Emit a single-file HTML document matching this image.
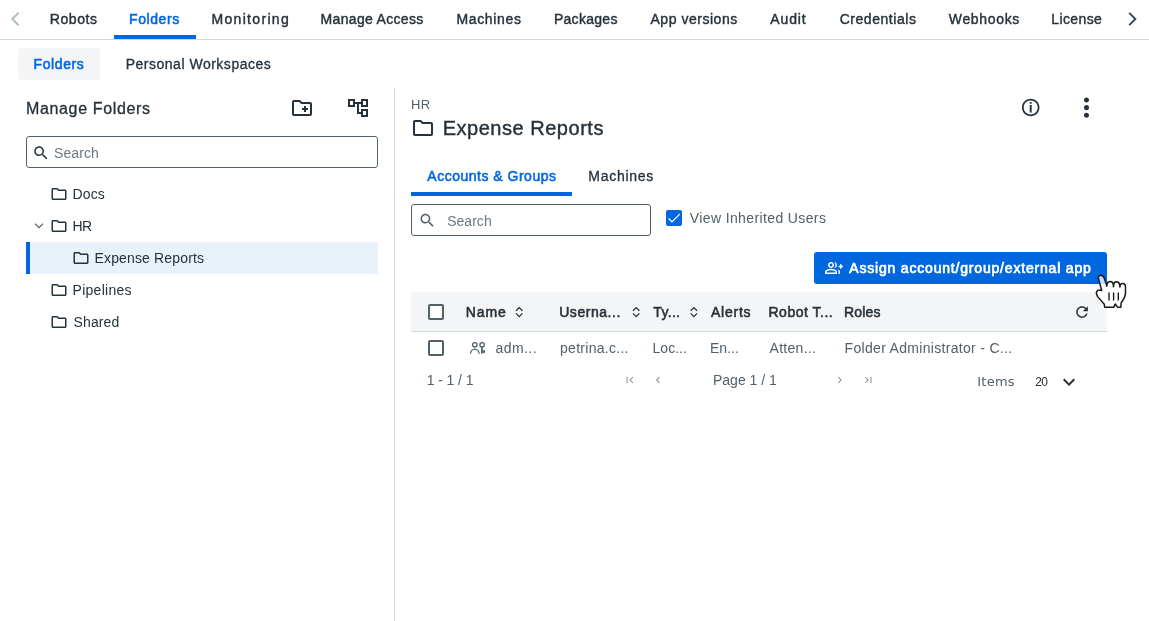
<!DOCTYPE html>
<html lang="en">
<head>
<meta charset="utf-8">
<title>Folders</title>
<style>
html,body{margin:0;padding:0;background:#fff;}
body{width:1149px;height:621px;position:relative;overflow:hidden;font-family:"Liberation Sans",sans-serif;}
.t{position:absolute;white-space:nowrap;line-height:20px;font-family:"Liberation Sans",sans-serif;}
.b{position:absolute;box-sizing:border-box;}
svg{position:absolute;overflow:visible;}
</style>
</head>
<body>
<!-- top nav -->
<div class="b" style="left:0;top:39px;width:1149px;height:1px;background:#cfd8dd"></div>
<div class="b" style="left:114px;top:35px;width:82px;height:4px;background:#0067df"></div>
<!-- sub tabs -->
<div class="b" style="left:18px;top:48px;width:82px;height:32px;background:#f4f5f7;border-radius:3px"></div>
<!-- left panel -->
<div class="b" style="left:26px;top:136px;width:352px;height:32px;border:1px solid #526069;border-radius:3px;background:#fff"></div>
<div class="b" style="left:26px;top:242px;width:352px;height:32px;background:#e9f1fa"></div>
<div class="b" style="left:26px;top:242px;width:4px;height:32px;background:#0067df"></div>
<div class="b" style="left:394px;top:88px;width:1px;height:533px;background:#cfd8dd"></div>
<!-- right panel header -->
<div class="b" style="left:411px;top:192px;width:161px;height:4px;background:#0067df"></div>
<div class="b" style="left:411px;top:204px;width:240px;height:32px;border:1px solid #526069;border-radius:3px;background:#fff"></div>
<div class="b" style="left:666px;top:210px;width:16px;height:16px;background:#0067df;border-radius:2px"></div>
<!-- button -->
<div class="b" style="left:814px;top:252px;width:293px;height:32px;background:#0067df;border-radius:3px"></div>
<!-- table -->
<div class="b" style="left:411px;top:292px;width:696px;height:39px;background:#f4f5f7"></div>
<div class="b" style="left:411px;top:331px;width:696px;height:1px;background:#cfd8dd"></div>
<div class="b" style="left:428px;top:304px;width:16px;height:16px;border:2px solid #526069;border-radius:2px;background:#fdfdfd"></div>
<div class="b" style="left:428px;top:340px;width:16px;height:16px;border:2px solid #526069;border-radius:2px;background:#fdfdfd"></div>
<!-- user icon -->
<!-- pagination -->
<svg style="left:0;top:0" width="1149" height="621" viewBox="0 0 1149 621">
<g transform="translate(9,10)"><polyline points="9.600,2.800 3.400,9 9.600,15.200" fill="none" stroke="#b4bec5" stroke-width="2.100"/></g>
<g transform="translate(1125,10)"><polyline points="4.200,2.800 10.400,9 4.200,15.200" fill="none" stroke="#374652" stroke-width="1.900"/></g>
<g transform="translate(290,96)" fill="#273139"><path d="M20 6h-8l-2-2H4c-1.11 0-1.99.89-1.99 2L2 18c0 1.11.89 2 2 2h16c1.11 0 2-.89 2-2V8c0-1.11-.89-2-2-2zm0 12H4V6h5.17l2 2H20v10zm-8-4h2v2h2v-2h2v-2h-2v-2h-2v2h-2z"/></g>
<g transform="translate(346,96)" fill="#273139"><path d="M22 11V3h-7v3H9V3H2v8h7V8h2v10h4v3h7v-8h-7v3h-2V8h2v3h7zM7 9H4V5h3v4zm10 6h3v4h-3v-4zm0-10h3v4h-3V5z"/></g>
<g transform="translate(32,144) scale(0.75)" fill="#273139"><path d="M15.5 14h-.79l-.28-.27C15.41 12.59 16 11.11 16 9.500 16 5.910 13.090 3 9.500 3S3 5.910 3 9.500 5.910 16 9.500 16c1.610 0 3.090-.59 4.230-1.570l.27.280v.79l5 4.990L20.490 19l-4.990-5zm-6 0C7.010 14 5 11.990 5 9.500S7.010 5 9.500 5 14 7.010 14 9.500 11.990 14 9.500 14z"/></g>
<g transform="translate(50,185) scale(0.75)" fill="#273139"><path d="M9.17 6l2 2H20v10H4V6h5.170M10 4H4c-1.100 0-1.990.9-1.990 2L2 18c0 1.100.9 2 2 2h16c1.100 0 2-.9 2-2V8c0-1.100-.9-2-2-2h-8l-2-2z"/></g>
<g transform="translate(50,217) scale(0.75)" fill="#273139"><path d="M9.17 6l2 2H20v10H4V6h5.170M10 4H4c-1.100 0-1.990.9-1.990 2L2 18c0 1.100.9 2 2 2h16c1.100 0 2-.9 2-2V8c0-1.100-.9-2-2-2h-8l-2-2z"/></g>
<g transform="translate(72,249) scale(0.75)" fill="#273139"><path d="M9.17 6l2 2H20v10H4V6h5.170M10 4H4c-1.100 0-1.990.9-1.990 2L2 18c0 1.100.9 2 2 2h16c1.100 0 2-.9 2-2V8c0-1.100-.9-2-2-2h-8l-2-2z"/></g>
<g transform="translate(50,281) scale(0.75)" fill="#273139"><path d="M9.17 6l2 2H20v10H4V6h5.170M10 4H4c-1.100 0-1.990.9-1.990 2L2 18c0 1.100.9 2 2 2h16c1.100 0 2-.9 2-2V8c0-1.100-.9-2-2-2h-8l-2-2z"/></g>
<g transform="translate(50,313) scale(0.75)" fill="#273139"><path d="M9.17 6l2 2H20v10H4V6h5.170M10 4H4c-1.100 0-1.990.9-1.990 2L2 18c0 1.100.9 2 2 2h16c1.100 0 2-.9 2-2V8c0-1.100-.9-2-2-2h-8l-2-2z"/></g>
<g transform="translate(33,220)"><polyline points="2,3.600 6,7.600 10,3.600" fill="none" stroke="#526069" stroke-width="1.300"/></g>
<g transform="translate(411,116)" fill="#273139"><path d="M9.17 6l2 2H20v10H4V6h5.170M10 4H4c-1.100 0-1.990.9-1.990 2L2 18c0 1.100.9 2 2 2h16c1.100 0 2-.9 2-2V8c0-1.100-.9-2-2-2h-8l-2-2z"/></g>
<g transform="translate(1020.2,97) scale(0.875)" fill="#273139"><path d="M10.900 5.800h2.200v1.800h-2.200zM10.900 9h2.200v8.800h-2.200zM12 2C6.480 2 2 6.480 2 12s4.480 10 10 10 10-4.480 10-10S17.520 2 12 2zm0 18c-4.410 0-8-3.590-8-8s3.590-8 8-8 8 3.590 8 8-3.590 8-8 8z"/></g>
<g transform="translate(1071.25,92.4) scale(1.27083)" fill="#273139"><path d="M12 8c1.100 0 2-.9 2-2s-.9-2-2-2-2 .9-2 2 .9 2 2 2zm0 2c-1.100 0-2 .9-2 2s.9 2 2 2 2-.9 2-2-.9-2-2-2zm0 6c-1.100 0-2 .9-2 2s.9 2 2 2 2-.9 2-2-.9-2-2-2z"/></g>
<g transform="translate(418.3,211.5) scale(0.75)" fill="#526069"><path d="M15.5 14h-.79l-.28-.27C15.41 12.59 16 11.11 16 9.500 16 5.910 13.090 3 9.500 3S3 5.910 3 9.500 5.910 16 9.500 16c1.610 0 3.090-.59 4.230-1.570l.27.280v.79l5 4.990L20.490 19l-4.990-5zm-6 0C7.010 14 5 11.990 5 9.500S7.010 5 9.500 5 14 7.010 14 9.500 11.990 14 9.500 14z"/></g>
<g transform="translate(665.8,209.8) scale(0.6875)" fill="#fff"><path d="M9 16.170L4.830 12l-1.420 1.410L9 19 21 7l-1.410-1.410z"/></g>
<g transform="translate(825,259) scale(0.75)" fill="#fff"><path d="M22 9V7h-2v2h-2v2h2v2h2v-2h2V9zM8 12c2.210 0 4-1.790 4-4s-1.790-4-4-4-4 1.790-4 4 1.790 4 4 4zm0-6c1.100 0 2 .9 2 2s-.9 2-2 2-2-.9-2-2 .9-2 2-2zm0 7c-2.670 0-8 1.340-8 4v3h16v-3c0-2.660-5.330-4-8-4zm6 5H2v-.99C2.200 16.290 5.300 15 8 15s5.800 1.290 6 2v1zM12.510 4.050C13.430 5.110 14 6.490 14 8s-.57 2.890-1.490 3.950C14.470 11.700 16 10.040 16 8s-1.530-3.700-3.490-3.950zm4.020 9.780C17.420 14.660 18 15.700 18 17v3h2v-3c0-1.450-1.590-2.510-3.470-3.170z"/></g>
<g transform="translate(513.2,306)" fill="none" stroke="#273139" stroke-width="1.3"><polyline points="2.8,4.800 6,1.600 9.200,4.800"/><polyline points="2.800,7.400 6,10.600 9.200,7.400"/></g>
<g transform="translate(630.2,306)" fill="none" stroke="#273139" stroke-width="1.3"><polyline points="2.8,4.800 6,1.600 9.200,4.800"/><polyline points="2.800,7.400 6,10.600 9.200,7.400"/></g>
<g transform="translate(687.9,306)" fill="none" stroke="#273139" stroke-width="1.3"><polyline points="2.8,4.800 6,1.600 9.200,4.800"/><polyline points="2.800,7.400 6,10.600 9.200,7.400"/></g>
<g transform="translate(1073.25,303.35) scale(0.729167)" fill="#273139"><path d="M17.650 6.350C16.200 4.900 14.210 4 12 4c-4.420 0-7.990 3.580-7.990 8s3.570 8 7.990 8c3.730 0 6.840-2.550 7.730-6h-2.080c-.82 2.330-3.040 4-5.650 4-3.310 0-6-2.690-6-6s2.690-6 6-6c1.660 0 3.140.69 4.220 1.780L13 11h7V4l-2.350 2.350z"/></g>
<g transform="translate(468,340) scale(1) translate(-468,-340)" fill="none" stroke="#526069" stroke-width="1.300">
<circle cx="474.800" cy="344.800" r="2.200"/><path d="M470.500 353.700a4.300 4.600 0 0 1 8.600 0"/>
<circle cx="482.100" cy="344.800" r="2.200"/><path d="M481.800 347v6.500" /><rect x="482.300" y="350.200" width="2.600" height="2.700" fill="#526069" stroke="none"/><rect x="481.150" y="347" width="1.300" height="6.500" fill="#526069" stroke="none"/>
</g>
<g transform="translate(623.3,373.4) scale(0.541667)" fill="#8a97a0"><path d="M18.410 16.590L13.820 12l4.590-4.590L17 6l-6 6 6 6zM6 6h2v12H6z"/></g>
<g transform="translate(651.56,373.4) scale(0.541667)" fill="#8a97a0"><path d="M15.410 7.410L14 6l-6 6 6 6 1.410-1.410L10.830 12z"/></g>
<g transform="translate(833.3,373.4) scale(0.541667)" fill="#8a97a0"><path d="M10 6L8.590 7.410 13.170 12l-4.580 4.590L10 18l6-6z"/></g>
<g transform="translate(861.8,373.4) scale(0.541667)" fill="#8a97a0"><path d="M5.590 7.410L10.180 12l-4.590 4.590L7 18l6-6-6-6zM16 6h2v12h-2z"/></g>
<g transform="translate(1057,370)" fill="#273139"><path d="M16.590 8.590L12 13.170 7.410 8.590 6 10l6 6 6-6z"/></g>
</svg>
<div style="position:absolute;left:0;top:0;width:1149px;height:621px;will-change:transform">
<span class="t" style="left:49.75px;top:9.00px;font-size:14px;font-weight:400;color:#273139;letter-spacing:0.588px;-webkit-text-stroke:0.4px #273139;">Robots</span>
<span class="t" style="left:129.10px;top:9.00px;font-size:14px;font-weight:400;color:#0067df;letter-spacing:0.570px;-webkit-text-stroke:0.55px #0067df;">Folders</span>
<span class="t" style="left:211.40px;top:9.00px;font-size:14px;font-weight:400;color:#273139;letter-spacing:1.336px;-webkit-text-stroke:0.4px #273139;">Monitoring</span>
<span class="t" style="left:320.60px;top:9.00px;font-size:14px;font-weight:400;color:#273139;letter-spacing:0.316px;-webkit-text-stroke:0.4px #273139;">Manage Access</span>
<span class="t" style="left:456.40px;top:9.00px;font-size:14px;font-weight:400;color:#273139;letter-spacing:0.669px;-webkit-text-stroke:0.4px #273139;">Machines</span>
<span class="t" style="left:553.90px;top:9.00px;font-size:14px;font-weight:400;color:#273139;letter-spacing:0.288px;-webkit-text-stroke:0.4px #273139;">Packages</span>
<span class="t" style="left:650.50px;top:9.00px;font-size:14px;font-weight:400;color:#273139;letter-spacing:0.524px;-webkit-text-stroke:0.4px #273139;">App versions</span>
<span class="t" style="left:770.30px;top:9.00px;font-size:14px;font-weight:400;color:#273139;letter-spacing:0.870px;-webkit-text-stroke:0.4px #273139;">Audit</span>
<span class="t" style="left:839.70px;top:9.00px;font-size:14px;font-weight:400;color:#273139;letter-spacing:0.539px;-webkit-text-stroke:0.4px #273139;">Credentials</span>
<span class="t" style="left:948.80px;top:9.00px;font-size:14px;font-weight:400;color:#273139;letter-spacing:0.658px;-webkit-text-stroke:0.4px #273139;">Webhooks</span>
<span class="t" style="left:1051.30px;top:9.00px;font-size:14px;font-weight:400;color:#273139;letter-spacing:0.389px;-webkit-text-stroke:0.4px #273139;">License</span>
<span class="t" style="left:33.60px;top:54.00px;font-size:14px;font-weight:400;color:#0067df;letter-spacing:0.586px;-webkit-text-stroke:0.55px #0067df;">Folders</span>
<span class="t" style="left:125.70px;top:54.00px;font-size:14px;font-weight:400;color:#273139;letter-spacing:0.510px;-webkit-text-stroke:0.3px #273139;">Personal Workspaces</span>
<span class="t" style="left:26.00px;top:99.00px;font-size:16px;font-weight:400;color:#273139;letter-spacing:0.645px;-webkit-text-stroke:0.3px #273139;">Manage Folders</span>
<span class="t" style="left:54.00px;top:143.00px;font-size:14px;font-weight:400;color:#6b7882;letter-spacing:0.086px;">Search</span>
<span class="t" style="left:72.60px;top:184.00px;font-size:14px;font-weight:400;color:#273139;letter-spacing:0.068px;">Docs</span>
<span class="t" style="left:72.60px;top:216.00px;font-size:14px;font-weight:400;color:#273139;letter-spacing:-0.710px;">HR</span>
<span class="t" style="left:94.50px;top:248.00px;font-size:14px;font-weight:400;color:#273139;letter-spacing:0.151px;">Expense Reports</span>
<span class="t" style="left:72.60px;top:280.00px;font-size:14px;font-weight:400;color:#273139;letter-spacing:0.261px;">Pipelines</span>
<span class="t" style="left:73.60px;top:312.00px;font-size:14px;font-weight:400;color:#273139;letter-spacing:0.108px;">Shared</span>
<span class="t" style="left:411.00px;top:95.00px;font-size:13px;font-weight:400;color:#526069;letter-spacing:0.412px;">HR</span>
<span class="t" style="left:442.70px;top:118.00px;font-size:20px;font-weight:400;color:#273139;letter-spacing:0.520px;-webkit-text-stroke:0.4px #273139;">Expense Reports</span>
<span class="t" style="left:427.30px;top:166.00px;font-size:14px;font-weight:400;color:#0067df;letter-spacing:0.505px;-webkit-text-stroke:0.55px #0067df;">Accounts &amp; Groups</span>
<span class="t" style="left:588.30px;top:166.00px;font-size:14px;font-weight:400;color:#273139;letter-spacing:0.712px;-webkit-text-stroke:0.3px #273139;">Machines</span>
<span class="t" style="left:447.20px;top:211.00px;font-size:14px;font-weight:400;color:#6b7882;letter-spacing:0.026px;">Search</span>
<span class="t" style="left:689.80px;top:208.00px;font-size:14px;font-weight:400;color:#526069;letter-spacing:0.378px;">View Inherited Users</span>
<span class="t" style="left:849.30px;top:258.00px;font-size:14px;font-weight:400;color:#ffffff;letter-spacing:0.809px;-webkit-text-stroke:0.7px #ffffff;">Assign account/group/external app</span>
<span class="t" style="left:465.80px;top:302.00px;font-size:14px;font-weight:400;color:#273139;letter-spacing:0.880px;-webkit-text-stroke:0.55px #273139;">Name</span>
<span class="t" style="left:559.20px;top:302.00px;font-size:14px;font-weight:400;color:#273139;letter-spacing:0.549px;-webkit-text-stroke:0.55px #273139;">Userna...</span>
<span class="t" style="left:653.30px;top:302.00px;font-size:14px;font-weight:400;color:#273139;letter-spacing:0.320px;-webkit-text-stroke:0.55px #273139;">Ty...</span>
<span class="t" style="left:711.00px;top:302.00px;font-size:14px;font-weight:400;color:#273139;letter-spacing:0.763px;-webkit-text-stroke:0.55px #273139;">Alerts</span>
<span class="t" style="left:768.50px;top:302.00px;font-size:14px;font-weight:400;color:#273139;letter-spacing:0.508px;-webkit-text-stroke:0.55px #273139;">Robot T...</span>
<span class="t" style="left:844.00px;top:302.00px;font-size:14px;font-weight:400;color:#273139;letter-spacing:0.202px;-webkit-text-stroke:0.55px #273139;">Roles</span>
<span class="t" style="left:495.40px;top:338.00px;font-size:14px;font-weight:400;color:#526069;letter-spacing:0.457px;">adm...</span>
<span class="t" style="left:560.00px;top:338.00px;font-size:14px;font-weight:400;color:#526069;letter-spacing:0.284px;">petrina.c...</span>
<span class="t" style="left:652.60px;top:338.00px;font-size:14px;font-weight:400;color:#526069;letter-spacing:-0.010px;">Loc...</span>
<span class="t" style="left:710.00px;top:338.00px;font-size:14px;font-weight:400;color:#526069;letter-spacing:0.024px;">En...</span>
<span class="t" style="left:769.50px;top:338.00px;font-size:14px;font-weight:400;color:#526069;letter-spacing:0.290px;">Atten...</span>
<span class="t" style="left:844.60px;top:338.00px;font-size:14px;font-weight:400;color:#526069;letter-spacing:0.309px;">Folder Administrator - C...</span>
<span class="t" style="left:426.70px;top:370.00px;font-size:14px;font-weight:400;color:#526069;letter-spacing:-0.085px;">1 - 1 / 1</span>
<span class="t" style="left:713.00px;top:370.00px;font-size:14px;font-weight:400;color:#526069;letter-spacing:-0.005px;">Page 1 / 1</span>
<span class="t" style="left:977.30px;top:372.00px;font-size:13px;font-weight:400;color:#526069;letter-spacing:0.227px;font-family:'DejaVu Sans',sans-serif;">Items</span>
<span class="t" style="left:1035.20px;top:372.00px;font-size:12px;font-weight:400;color:#273139;letter-spacing:-0.574px;">20</span>
</div>
<!-- cursor -->
<svg style="left:0;top:0" width="1149" height="621" viewBox="0 0 1149 621">
<g transform="translate(1090,268) scale(1) translate(-1090,-268)">
<path d="M1098.55 278.87Q1097.61 275.61 1100.87 275.25Q1103.41 275.25 1104.49 278.87L1106.81 286.12L1107.25 283.58Q1107.75 281.41 1110.29 281.41Q1113.04 281.41 1113.33 284.67L1113.41 286.84L1113.77 284.3Q1114.06 281.77 1116.45 281.77Q1119.35 281.77 1119.71 285.03L1119.86 286.99L1120.29 285.39Q1120.8 283.43 1122.97 283.58Q1125.51 283.8 1125.51 286.84L1125.51 293.36Q1125.14 297.71 1121.16 302.78L1120.8 307.13L1117.54 307.13L1115.22 304.01L1113.77 307.13L1104.64 307.13L1104.28 304.23L1097.61 296.62Q1095.8 293.36 1096.67 291.55Q1097.97 289.38 1101.74 290.46Z" fill="rgba(255,255,255,0.78)" stroke="#1a1a1a" stroke-width="1.5" stroke-linejoin="round"/>
<path d="M1109 292.6v8M1113.6 292.6v8M1118.3 292.6v8" stroke="#1a1a1a" stroke-width="1.4" fill="none"/>
</g>
</svg>
</body>
</html>
